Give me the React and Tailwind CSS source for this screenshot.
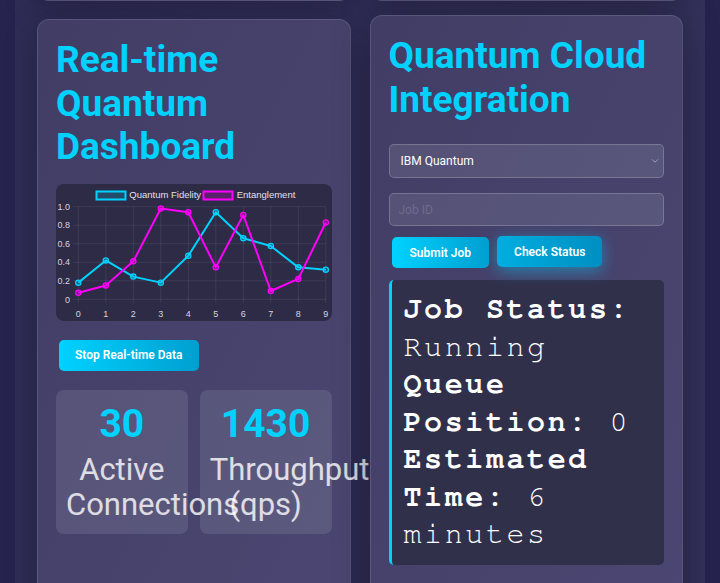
import { ChevronDown } from "lucide-react";

const fidelity = [0.18, 0.42, 0.245, 0.18, 0.47, 0.94, 0.66, 0.575, 0.345, 0.32];
const entanglement = [0.07, 0.15, 0.41, 0.98, 0.94, 0.345, 0.91, 0.09, 0.22, 0.83];

const px = (i) => 22.3 + i * 27.5;
const py = (v) => 115.3 - v * 92.6;

function Chart() {
    const line = (data) => data.map((v, i) => `${px(i)},${py(v)}`).join(" ");
    return (
        <div className="h-[137px] w-full overflow-hidden rounded-lg bg-[#2d2b45]">
            <svg width="276" height="137" viewBox="0 0 276 137" className="font-['Liberation_Sans',sans-serif]">
                {[0, 0.2, 0.4, 0.6, 0.8, 1].map((v) => (
                    <g key={v}>
                        <line x1="17" x2="270" y1={py(v)} y2={py(v)} stroke="rgba(255,255,255,0.08)" />
                        <text x="14" y={py(v) + 3.2} textAnchor="end" fontSize="9" fill="#d6d4e2">
                            {v === 0 ? "0" : v.toFixed(1)}
                        </text>
                    </g>
                ))}
                {fidelity.map((_, i) => (
                    <g key={i}>
                        <line x1={px(i)} x2={px(i)} y1={py(1)} y2="119" stroke="rgba(255,255,255,0.08)" />
                        <text x={px(i)} y="132.5" textAnchor="middle" fontSize="9" fill="#d6d4e2">
                            {i}
                        </text>
                    </g>
                ))}

                <rect x="40.5" y="7.5" width="29" height="8" fill="rgba(0,210,255,0.2)" stroke="#00d2ff" strokeWidth="2" />
                <text x="73.3" y="14" fontSize="9.5" fill="#e2e0ec">Quantum Fidelity</text>
                <rect x="147.5" y="7.5" width="29" height="8" fill="rgba(255,0,255,0.2)" stroke="#ff00ff" strokeWidth="2" />
                <text x="180.7" y="14" fontSize="9.5" fill="#e2e0ec">Entanglement</text>

                <polyline points={line(fidelity)} fill="none" stroke="#00d2ff" strokeWidth="2" strokeLinejoin="round" />
                <polyline points={line(entanglement)} fill="none" stroke="#ff00ff" strokeWidth="2" strokeLinejoin="round" />
                {fidelity.map((v, i) => (
                    <circle key={"f" + i} cx={px(i)} cy={py(v)} r="2.6" fill="rgba(0,210,255,0.25)" stroke="#00d2ff" strokeWidth="1.3" />
                ))}
                {entanglement.map((v, i) => (
                    <circle key={"e" + i} cx={px(i)} cy={py(v)} r="2.6" fill="rgba(255,0,255,0.25)" stroke="#ff00ff" strokeWidth="1.3" />
                ))}
            </svg>
        </div>
    );
}

function Stat({ value, label }) {
    return (
        <div className="h-[144px] rounded-lg bg-white/10 px-[10px] pt-[12px] text-center">
            <div className="text-[39px] font-bold leading-[1.172] text-[#00d2ff]">{value}</div>
            <div className="mt-[5px] text-[31px] leading-[35px] text-white/80">{label}</div>
        </div>
    );
}

export default function App() {
    const card = "rounded-[12px] border border-white/10 bg-gradient-to-br from-[#413d65] to-[#4b4772] shadow-[0_8px_32px_rgba(0,0,0,0.25)]";
    const btn = "h-[31px] whitespace-nowrap rounded-[5px] bg-gradient-to-r from-[#00d2ff] to-[#009fd0] text-[12px] font-semibold text-white";
    const title = "text-[37px] font-bold leading-[43.5px] text-[#00d2ff]";

    return (
        <div className="h-[583px] overflow-hidden bg-[#26234f] font-['Roboto',sans-serif]">
            <div className="mx-[15px] flex h-full flex-col bg-gradient-to-r from-[#2f2c57] to-[#34315c] px-[22px]">
                <div className="-mt-[40px] grid grid-cols-2 gap-[19px]">
                    <div className={card + " h-[41px]"} />
                    <div className={card + " h-[41px]"} />
                </div>

                <div className="mt-[18px] grid grid-cols-2 items-start gap-[19px]">
                    <div className={card + " flex h-[620px] flex-col p-[18px]"}>
                        <h2 className={title}>Real-time Quantum Dashboard</h2>
                        <div className="mt-[15px]">
                            <Chart />
                        </div>
                        <div className="mt-[19px] flex pl-[3px]">
                            <button className={btn + " px-[16px]"}>Stop Real-time Data</button>
                        </div>
                        <div className="mt-[19px] grid grid-cols-2 gap-3">
                            <Stat value="30" label="Active Connections" />
                            <Stat value="1430" label="Throughput (qps)" />
                        </div>
                    </div>

                    <div className={card + " flex h-[620px] -translate-y-1 flex-col p-[18px] shadow-[0_10px_36px_rgba(0,0,0,0.35)]"}>
                        <h2 className={title}>Quantum Cloud Integration</h2>
                        <div className="relative mt-[23px]">
                            <select className="h-[34px] w-full appearance-none rounded-[5px] border border-white/20 bg-white/10 px-[11px] text-[12px] text-white outline-none">
                                <option>IBM Quantum</option>
                                <option>Google Quantum AI</option>
                                <option>Amazon Braket</option>
                            </select>
                            <ChevronDown size={10} strokeWidth={1.5} className="pointer-events-none absolute right-[4px] top-[12px] text-white/70" />
                        </div>
                        <input
                            placeholder="Job ID"
                            className="mt-[15px] h-[33px] w-full rounded-[5px] border border-white/20 bg-white/10 px-[9px] text-[12px] text-white outline-none placeholder:text-[#6e6b8c]"
                        />
                        <div className="mt-[11px] flex items-start gap-[8px] pl-[3px]">
                            <button className={btn + " px-[18px]"}>Submit Job</button>
                            <button className="h-[31px] -translate-y-px rounded-[5px] bg-gradient-to-r from-[#00aee0] to-[#008fc2] px-[17px] text-[12px] font-semibold text-white shadow-[0_4px_16px_rgba(0,210,255,0.45)]">
                                Check Status
                            </button>
                        </div>
                        <div className="mt-[12px] rounded-[5px] border-l-[3px] border-[#00d2ff] bg-[#31304b] py-[11px] pl-[12px] pr-[12px] font-['FreeMono',monospace] text-[30px] leading-[37.5px] tracking-[2.6px] text-white">
                            <p><strong>Job Status:</strong> Running</p>
                            <p><strong>Queue Position:</strong> 0</p>
                            <p><strong>Estimated Time:</strong> 6 minutes</p>
                        </div>
                    </div>
                </div>
            </div>
        </div>
    );
}
